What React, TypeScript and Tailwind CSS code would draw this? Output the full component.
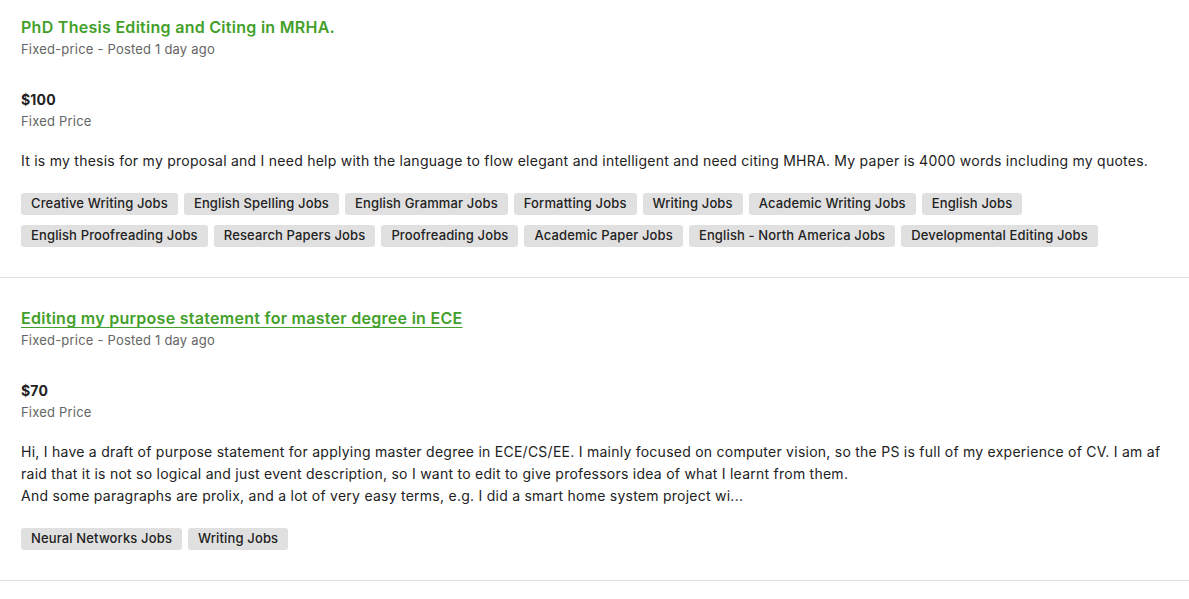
import React from 'react';

type Job = {
  title: string;
  underline?: boolean;
  price: string;
  lines: string[];
  tags: string[];
};

const jobs: Job[] = [
  {
    title: 'PhD Thesis Editing and Citing in MRHA.',
    price: '$100',
    lines: [
      'It is my thesis for my proposal and I need help with the language to flow elegant and intelligent and need citing MHRA. My paper is 4000 words including my quotes.',
    ],
    tags: [
      'Creative Writing Jobs',
      'English Spelling Jobs',
      'English Grammar Jobs',
      'Formatting Jobs',
      'Writing Jobs',
      'Academic Writing Jobs',
      'English Jobs',
      'English Proofreading Jobs',
      'Research Papers Jobs',
      'Proofreading Jobs',
      'Academic Paper Jobs',
      'English - North America Jobs',
      'Developmental Editing Jobs',
    ],
  },
  {
    title: 'Editing my purpose statement for master degree in ECE',
    underline: true,
    price: '$70',
    lines: [
      'Hi, I have a draft of purpose statement for applying master degree in ECE/CS/EE. I mainly focused on computer vision, so the PS is full of my experience of CV. I am af',
      'raid that it is not so logical and just event description, so I want to edit to give professors idea of what I learnt from them.',
      'And some paragraphs are prolix, and a lot of very easy terms, e.g. I did a smart home system project wi...',
    ],
    tags: ['Neural Networks Jobs', 'Writing Jobs'],
  },
];

function JobItem({ job, first }: { job: Job; first: boolean }) {
  return (
    <section
      className={`border-b border-[#e0e0e0] px-[21px] pb-[30px] ${first ? 'pt-[16px]' : 'pt-[29px]'}`}
    >
      <h2
        className={`text-[16px] leading-[22px] font-semibold tracking-[0.28px] text-[#43a02a] ${
          job.underline ? 'underline underline-offset-[3px] decoration-1' : ''
        }`}
      >
        {job.title}
      </h2>
      <p className="mt-[1px] text-[13px] leading-[20px] tracking-[0.2px] text-[#656565]">
        Fixed-price - Posted 1 day ago
      </p>
      <p className="mt-[31px] text-[14px] leading-[20px] font-bold tracking-[0.2px] text-[#222]">{job.price}</p>
      <p className="mt-[1px] text-[13px] leading-[20px] tracking-[0.2px] text-[#656565]">Fixed Price</p>
      <div className="mt-[19px] text-[14px] leading-[22px] tracking-[0.25px] text-[#222]">
        {job.lines.map((l, i) => (
          <div key={i} className="whitespace-nowrap">
            {l}
          </div>
        ))}
      </div>
      <div className="mt-[21px] flex flex-wrap gap-x-[6px] gap-y-[10px]">
        {job.tags.map((t) => (
          <span
            key={t}
            className="h-[22px] px-[10px] flex items-center rounded-[3px] bg-[#e0e0e0] text-[13px] font-medium tracking-[0.14px] text-[#222]"
          >
            {t}
          </span>
        ))}
      </div>
    </section>
  );
}

export default function App() {
  return (
    <div
      className="min-h-screen bg-white"
      style={{ fontFamily: 'Inter, "Noto Sans", sans-serif' }}
    >
      {jobs.map((j, i) => (
        <JobItem key={i} job={j} first={i === 0} />
      ))}
    </div>
  );
}
